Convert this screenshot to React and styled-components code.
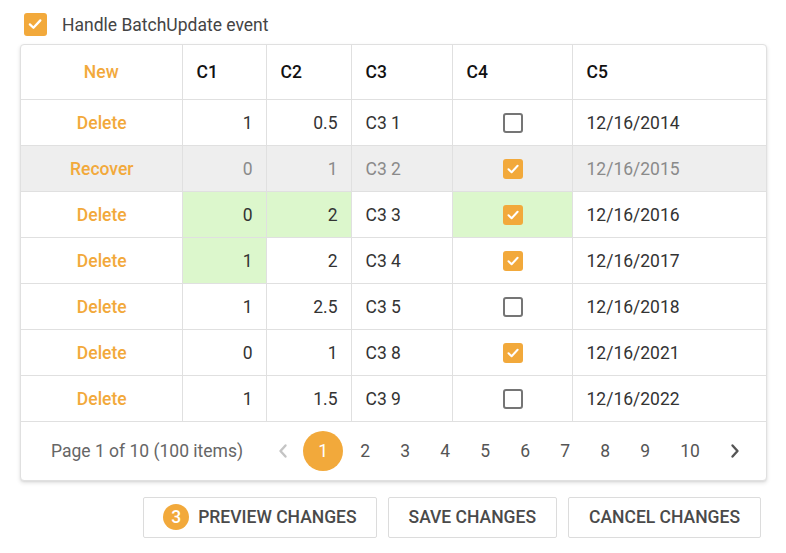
import React from "react";
import styled, { createGlobalStyle } from "styled-components";

const ORANGE = "#f2a93b";
const FS = "17.5px";

const Global = createGlobalStyle`
  html, body { margin: 0; padding: 0; background: #fff; }
  body { font-family: Roboto, "Noto Sans", Arial, sans-serif; font-size: ${FS}; color: #333; }
  * { box-sizing: border-box; }
`;

const Page = styled.div`
  padding: 13px 19px 0 20px;
  width: 786px;
`;

const TopRow = styled.label`
  display: flex;
  align-items: center;
  gap: 15px;
  padding-left: 4px;
  height: 23px;
  color: #444;
  font-size: ${FS};
`;

const Box = styled.span`
  width: ${(p) => p.$size || 20}px;
  height: ${(p) => p.$size || 20}px;
  border-radius: 3px;
  display: inline-flex;
  align-items: center;
  justify-content: center;
  background: ${(p) => (p.$checked ? ORANGE : "transparent")};
  border: ${(p) => (p.$checked ? "none" : "2px solid #757575")};
  vertical-align: middle;
`;

const Check = ({ checked, size }) => (
  <Box $checked={checked} $size={size}>
    {checked && (
      <svg width={size ? size * 0.7 : 14} height={size ? size * 0.7 : 14} viewBox="0 0 14 14">
        <path d="M2.5 7.3 L5.6 10.2 L11.6 3.8" fill="none" stroke="#fff" strokeWidth="2" strokeLinecap="round" strokeLinejoin="round" />
      </svg>
    )}
  </Box>
);

const Grid = styled.div`
  margin-top: 8px;
  width: 747px;
  border: 1px solid #e0e0e0;
  border-radius: 4px;
  background: #fff;
  box-shadow: 0 2px 4px rgba(0, 0, 0, 0.12), 0 1px 2px rgba(0, 0, 0, 0.06);
  overflow: hidden;
`;

const Table = styled.table`
  border-collapse: collapse;
  table-layout: fixed;
  width: 745px;
`;

const Th = styled.th`
  height: 54px;
  padding: 0 14px;
  font-weight: 500;
  font-size: ${FS};
  text-align: ${(p) => p.$align || "left"};
  color: ${(p) => (p.$accent ? ORANGE : "#111")};
  border-right: 1px solid #e0e0e0;
  border-bottom: 1px solid #e0e0e0;
  &:last-child { border-right: none; }
`;

const Tr = styled.tr`
  background: ${(p) => (p.$removed ? "#eeeeee" : "#fff")};
  color: ${(p) => (p.$removed ? "#8a8a8a" : "#333")};
`;

const Td = styled.td`
  height: 46px;
  padding: 1px 13px 0 14px;
  font-size: ${FS};
  text-align: ${(p) => p.$align || "left"};
  background: ${(p) => (p.$modified ? "#dcf7cc" : "transparent")};
  border-right: 1px solid #e0e0e0;
  border-bottom: 1px solid #e0e0e0;
  &:last-child { border-right: none; }
`;

const Link = styled.span`
  color: ${ORANGE};
  font-weight: 500;
`;

const Pager = styled.div`
  height: 58px;
  display: flex;
  align-items: center;
  padding-left: 30px;
  color: #666;
`;

const PagerInfo = styled.span`
  margin-right: 20px;
`;

const PageBtn = styled.span`
  min-width: ${(p) => (p.$wide ? 50 : 40)}px;
  height: 40px;
  display: inline-flex;
  align-items: center;
  justify-content: center;
  border-radius: 20px;
  background: ${(p) => (p.$active ? ORANGE : "transparent")};
  color: ${(p) => (p.$active ? "#fff" : p.$muted ? "#c4c4c4" : "#555")};
  margin-right: ${(p) => p.$mr || 0}px;
`;

const Actions = styled.div`
  display: flex;
  justify-content: flex-end;
  gap: 11px;
  width: 741px;
  margin-top: 16px;
`;

const Button = styled.button`
  height: 41px;
  padding: 0 ${(p) => (p.$badge ? 19 : 20)}px 0 ${(p) => (p.$badge ? 19 : 20)}px;
  display: inline-flex;
  align-items: center;
  gap: 9px;
  background: #fff;
  border: 1px solid #dcdcdc;
  border-radius: 2px;
  font-family: Roboto, sans-serif;
  font-size: ${FS};
  font-weight: 500;
  color: #4a4a4a;
  text-transform: uppercase;
`;

const Badge = styled.span`
  width: 26px;
  height: 26px;
  border-radius: 50%;
  background: ${ORANGE};
  color: #fff;
  display: inline-flex;
  align-items: center;
  justify-content: center;
  font-size: ${FS};
  font-weight: 500;
`;

const Chevron = ({ dir, color }) => (
  <svg width="14" height="16" viewBox="0 0 14 16">
    <path
      d={dir === "left" ? "M9.5 2.5 L4.5 8 L9.5 13.5" : "M4.5 2.5 L9.5 8 L4.5 13.5"}
      fill="none"
      stroke={color}
      strokeWidth="2.4"
      strokeLinecap="round"
      strokeLinejoin="round"
    />
  </svg>
);

const rows = [
  { c1: "1", c2: "0.5", c3: "C3 1", c4: false, c5: "12/16/2014" },
  { c1: "0", c2: "1", c3: "C3 2", c4: true, c5: "12/16/2015", removed: true },
  { c1: "0", c2: "2", c3: "C3 3", c4: true, c5: "12/16/2016", mod: ["c1", "c2", "c4"] },
  { c1: "1", c2: "2", c3: "C3 4", c4: true, c5: "12/16/2017", mod: ["c1"] },
  { c1: "1", c2: "2.5", c3: "C3 5", c4: false, c5: "12/16/2018" },
  { c1: "0", c2: "1", c3: "C3 8", c4: true, c5: "12/16/2021" },
  { c1: "1", c2: "1.5", c3: "C3 9", c4: false, c5: "12/16/2022" },
];

export default function App() {
  return (
    <Page>
      <Global />
      <TopRow>
        <Check checked size={23} />
        Handle BatchUpdate event
      </TopRow>
      <Grid>
        <Table>
          <colgroup>
            <col style={{ width: 161 }} />
            <col style={{ width: 84 }} />
            <col style={{ width: 85 }} />
            <col style={{ width: 101 }} />
            <col style={{ width: 120 }} />
            <col />
          </colgroup>
          <thead>
            <tr>
              <Th $align="center" $accent>New</Th>
              <Th>C1</Th>
              <Th>C2</Th>
              <Th>C3</Th>
              <Th>C4</Th>
              <Th>C5</Th>
            </tr>
          </thead>
          <tbody>
            {rows.map((r, i) => {
              const m = (k) => (r.mod || []).includes(k);
              return (
                <Tr key={i} $removed={r.removed}>
                  <Td $align="center">
                    <Link>{r.removed ? "Recover" : "Delete"}</Link>
                  </Td>
                  <Td $align="right" $modified={m("c1")}>{r.c1}</Td>
                  <Td $align="right" $modified={m("c2")}>{r.c2}</Td>
                  <Td>{r.c3}</Td>
                  <Td $align="center" $modified={m("c4")}>
                    <Check checked={r.c4} />
                  </Td>
                  <Td>{r.c5}</Td>
                </Tr>
              );
            })}
          </tbody>
        </Table>
        <Pager>
          <PagerInfo>Page 1 of 10 (100 items)</PagerInfo>
          <PageBtn $muted>
            <Chevron dir="left" color="#c4c4c4" />
          </PageBtn>
          <PageBtn $active $mr={2}>1</PageBtn>
          {["2", "3", "4", "5", "6", "7", "8", "9"].map((n) => (
            <PageBtn key={n}>{n}</PageBtn>
          ))}
          <PageBtn $wide>10</PageBtn>
          <PageBtn>
            <Chevron dir="right" color="#555" />
          </PageBtn>
        </Pager>
      </Grid>
      <Actions>
        <Button $badge>
          <Badge>3</Badge>
          Preview changes
        </Button>
        <Button>Save changes</Button>
        <Button>Cancel changes</Button>
      </Actions>
    </Page>
  );
}
